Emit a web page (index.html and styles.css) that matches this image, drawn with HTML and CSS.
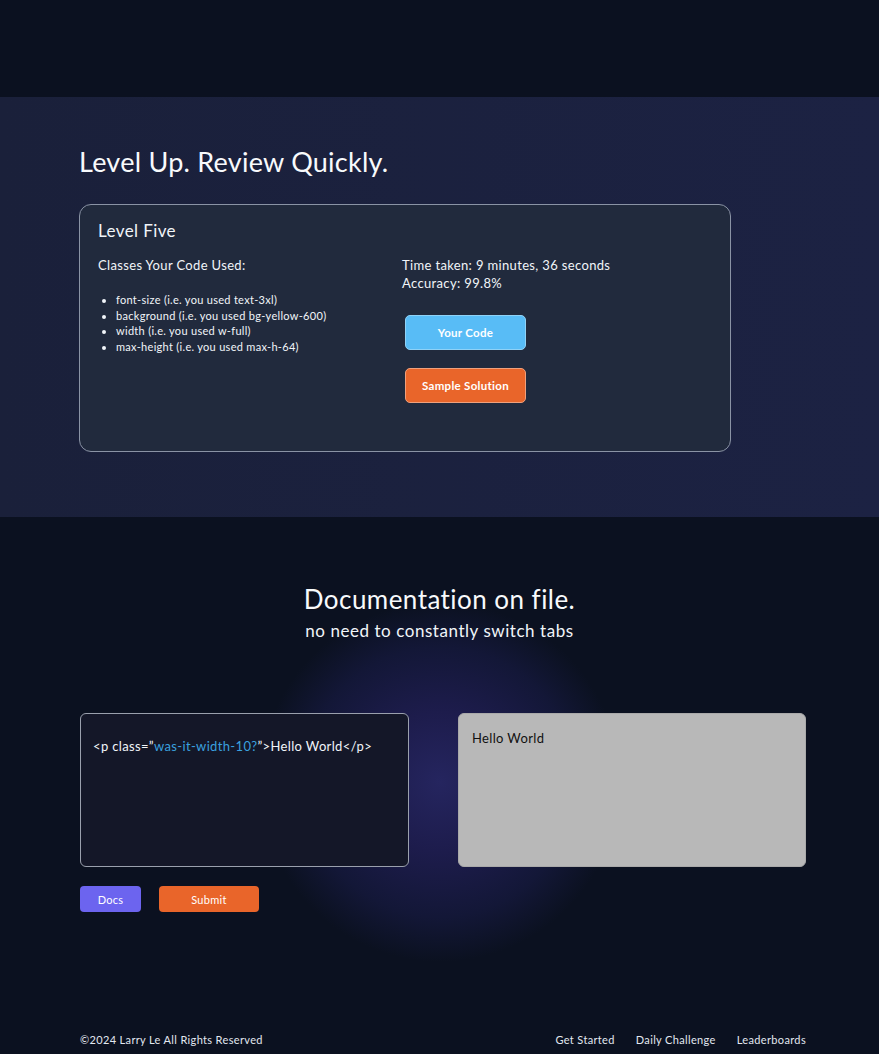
FILE: index.html
```html
<!DOCTYPE html>
<html lang="en">
<head>
<meta charset="utf-8">
<title>Level Up</title>
<link rel="stylesheet" href="styles.css">
</head>
<body>
<header class="topbar"></header>

<section class="review">
  <div class="container">
    <h1 class="title">Level Up. Review Quickly.</h1>
    <div class="card">
      <h2 class="card-title">Level Five</h2>
      <div class="card-grid">
        <div class="col">
          <p class="label">Classes Your Code Used:</p>
          <ul class="classes">
            <li>font-size (i.e. you used text-3xl)</li>
            <li>background (i.e. you used bg-yellow-600)</li>
            <li>width (i.e. you used w-full)</li>
            <li>max-height (i.e. you used max-h-64)</li>
          </ul>
        </div>
        <div class="col">
          <p class="stats">Time taken: 9 minutes, 36 seconds<br>Accuracy: 99.8%</p>
          <div class="actions">
            <button class="btn btn-sky">Your Code</button>
            <button class="btn btn-orange">Sample Solution</button>
          </div>
        </div>
      </div>
    </div>
  </div>
</section>

<section class="docs">
  <div class="docs-head">
    <h2 class="docs-title">Documentation on file.</h2>
    <p class="docs-sub">no need to constantly switch tabs</p>
  </div>
  <div class="container">
    <div class="editor-row">
      <div class="code-box">&lt;p class=”<span class="str">was-it-width-10?</span>”&gt;Hello World&lt;/p&gt;</div>
      <div class="preview-box">Hello World</div>
    </div>
    <div class="editor-actions">
      <button class="small-btn btn-indigo">Docs</button>
      <button class="small-btn btn-submit">Submit</button>
    </div>
  </div>
  <footer class="footer container">
    <span>©2024 Larry Le All Rights Reserved</span>
    <nav class="footer-links">
      <a href="#">Get Started</a>
      <a href="#">Daily Challenge</a>
      <a href="#">Leaderboards</a>
    </nav>
  </footer>
</section>
</body>
</html>
```

FILE: styles.css
```css
* { box-sizing: border-box; }

html, body {
  margin: 0;
  padding: 0;
  background: #0b1120;
  color: #f1f5f9;
  font-family: "Lato", "Noto Sans", sans-serif;
}

p, h1, h2, ul { margin: 0; }

.container {
  width: 726px;
  margin-left: 80px;
}

.topbar {
  height: 97px;
  background: #0b1120;
}

.review {
  height: 420px;
  background: linear-gradient(90deg, #1a203a 0%, #1c2243 100%);
  padding-top: 47px;
}

.title {
  font-size: 27px;
  font-weight: 400;
  line-height: 36px;
  letter-spacing: 0.25px;
  margin-left: -1px;
  color: #f8fafc;
}

.card {
  width: 652px;
  height: 248px;
  margin-top: 24px;
  margin-left: -1px;
  background: #212a3d;
  border: 1px solid #8a93a5;
  border-radius: 12px;
  padding: 14px 18px;
}

.card-title {
  font-size: 17px;
  font-weight: 400;
  line-height: 24px;
  letter-spacing: 0.4px;
  color: #f1f5f9;
}

.card-grid {
  display: grid;
  grid-template-columns: 304px 1fr;
  margin-top: 13px;
}

.label {
  font-size: 13px;
  line-height: 18px;
  letter-spacing: 0.35px;
}

.classes {
  margin-top: 18px;
  padding-left: 18px;
  font-size: 11px;
  line-height: 15.6px;
  letter-spacing: 0.3px;
  list-style: disc;
}

.stats {
  font-size: 13px;
  line-height: 18px;
  letter-spacing: 0.35px;
}

.actions {
  display: flex;
  flex-direction: column;
  gap: 18px;
  margin-top: 23px;
  margin-left: 3px;
}

.btn {
  width: 121px;
  height: 35px;
  border-radius: 5px;
  font-family: inherit;
  font-size: 11.5px;
  font-weight: 700;
  letter-spacing: 0.3px;
  color: #ffffff;
  cursor: pointer;
}

.btn-sky {
  background: #58bcf6;
  border: 1px solid #8fd2f7;
}

.btn-orange {
  background: #e9652a;
  border: 1px solid #f0a07c;
}

.docs {
  min-height: 537px;
  background:
    radial-gradient(circle at 440px 265px, #25255f 0px, #1d1c4c 70px, #131737 135px, rgba(11,17,32,0) 180px),
    #0b1120;
  padding-top: 66px;
}

.docs-head {
  text-align: center;
}

.docs-title {
  font-size: 26px;
  font-weight: 400;
  line-height: 32px;
  letter-spacing: 0.45px;
  color: #f8fafc;
}

.docs-sub {
  font-size: 17px;
  line-height: 24px;
  letter-spacing: 0.55px;
  margin-top: 4px;
}

.editor-row {
  display: flex;
  gap: 49px;
  margin-top: 70px;
}

.code-box {
  width: 329px;
  height: 154px;
  background: #141728;
  border: 1px solid #9aa0ad;
  border-radius: 6px;
  padding: 23px 12px;
  font-size: 13px;
  line-height: 18px;
  letter-spacing: 0.35px;
  color: #f1f5f9;
}

.str { color: #3aa0df; }

.preview-box {
  flex: 1;
  height: 154px;
  background: #b8b8b8;
  border: 1px solid #a9a9a9;
  border-radius: 6px;
  padding: 15px 13px;
  font-size: 13px;
  line-height: 18px;
  letter-spacing: 0.35px;
  color: #111111;
}

.editor-actions {
  display: flex;
  gap: 18px;
  margin-top: 19px;
}

.small-btn {
  height: 26px;
  border-radius: 4px;
  font-family: inherit;
  font-size: 11px;
  letter-spacing: 0.3px;
  color: #ffffff;
  border: none;
}

.btn-indigo {
  width: 61px;
  background: #6c64ef;
}

.btn-submit {
  width: 100px;
  background: #e9652a;
}

.footer {
  display: flex;
  justify-content: space-between;
  align-items: center;
  margin-top: 120px;
  font-size: 11px;
  line-height: 16px;
  letter-spacing: 0.35px;
  color: #e2e8f0;
}

.footer-links {
  display: flex;
  gap: 21px;
}

.footer-links a {
  color: #e2e8f0;
  text-decoration: none;
}
```
